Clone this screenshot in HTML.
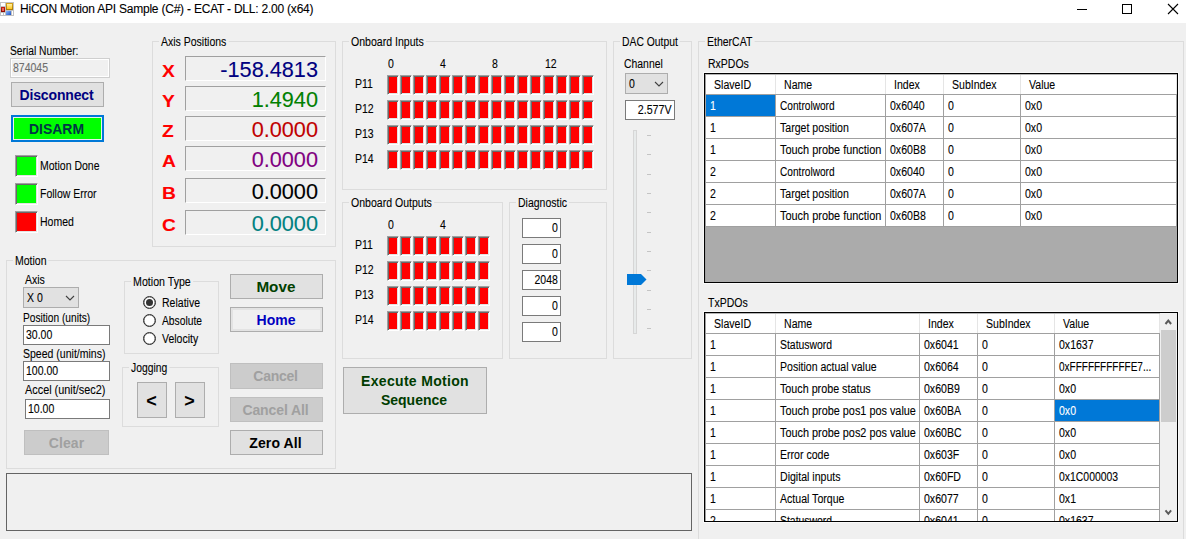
<!DOCTYPE html>
<html lang="en"><head><meta charset="utf-8"><title>HiCON Motion API Sample (C#)</title>
<style>
*{box-sizing:border-box;margin:0;padding:0}
html,body{width:1186px;height:539px;overflow:hidden;background:#f0f0f0}
body{position:relative;font-family:"Liberation Sans",sans-serif;font-size:12.5px;color:#000;line-height:13px;letter-spacing:0;-webkit-text-stroke:0.1px}
.t{display:inline-block;transform-origin:0 0;transform:scaleX(0.84);white-space:nowrap}
.tr{display:inline-block;transform-origin:100% 0;transform:scaleX(0.84);white-space:nowrap}
.a{position:absolute;white-space:nowrap}
.gb{position:absolute;border:1px solid #dcdcdc}
.lg{position:absolute;background:#f0f0f0;white-space:nowrap;padding:0 2.4px;transform-origin:0 0;transform:scaleX(0.84)}
.btn{position:absolute;border:1px solid #adadad;background:#e1e1e1;display:flex;align-items:center;justify-content:center;text-align:center;font-family:"Liberation Sans",sans-serif;font-weight:bold;font-size:14px;letter-spacing:0;line-height:19px;padding-top:2px;-webkit-text-stroke:0}
.btn.dis{background:#cccccc;border-color:#bfbfbf;color:#a0a0a0}
.tb{position:absolute;border:1px solid #7a7a7a;background:#fff}
.led{position:absolute;width:12px;height:20px;background:#ff0000;border-style:solid;border-width:1px;border-color:#a0a0a0 #fff #fff #a0a0a0;box-shadow:inset 1px 1px 0 #696969,inset -1px -1px 0 #e3e3e3}
.ind{position:absolute;width:23px;height:22px;border-style:solid;border-width:1px;border-color:#a0a0a0 #fff #fff #a0a0a0}
.pos{position:absolute;left:185px;width:141px;height:25px;border-style:solid;border-width:1px;border-color:#a0a0a0 #fff #fff #a0a0a0;font-size:21.7px;line-height:25px;text-align:right;padding-right:7px;letter-spacing:0}
.ax{position:absolute;left:162px;font-weight:bold;font-size:17px;color:#ff0000;line-height:19px;letter-spacing:0;transform:scaleX(1.13);transform-origin:0 0}
.combo{position:absolute;border:1px solid #adadad;background:#e1e1e1}
.radio{position:absolute;width:13px;height:13px;border:1px solid #2a2a2a;border-radius:50%;background:#fff;box-shadow:inset 0 0 0 0.35px #333}
.radio.on::after{content:"";position:absolute;left:2px;top:2px;width:7px;height:7px;border-radius:50%;background:#333}
.grid{position:absolute;left:704px;width:474px;height:210px;border:1px solid #000;background:#ababab;overflow:hidden;box-shadow:0 0 0 1px #fafafa}
.grid .c{position:absolute;height:22px;background:#fff;border-right:1px solid #a0a0a0;border-bottom:1px solid #a0a0a0;padding-left:4px;padding-top:1px;line-height:21px;overflow:hidden;white-space:nowrap}
.grid .h{position:absolute;height:19px;background:#fff;border-right:1px solid #e5e5e5;padding-left:8px;padding-top:1px;line-height:19px;white-space:nowrap}
.grid .sel{background:#0078d7;color:#fff}
</style></head><body>
<div class="a" style="left:0;top:0;width:1186px;height:23px;background:#fff"></div>
<svg class="a" style="left:0;top:2px" width="14" height="14" viewBox="0 0 14 14">
<defs>
<linearGradient id="gy" x1="0" y1="0" x2="0" y2="1"><stop offset="0" stop-color="#fff2a8"/><stop offset="1" stop-color="#ffc61a"/></linearGradient>
<linearGradient id="gyb" x1="0" y1="0" x2="0" y2="1"><stop offset="0" stop-color="#d8a418"/><stop offset="1" stop-color="#a87808"/></linearGradient>
<linearGradient id="gr" x1="0" y1="0" x2="0" y2="1"><stop offset="0" stop-color="#c82010"/><stop offset="1" stop-color="#8c0800"/></linearGradient>
<linearGradient id="gb" x1="0" y1="0" x2="1" y2="1"><stop offset="0" stop-color="#8ab8ff"/><stop offset="1" stop-color="#1c50c0"/></linearGradient>
</defs>
<rect x="0" y="0" width="14" height="14" fill="#c2c2c2"/>
<rect x="1" y="1" width="4" height="3" fill="#fff"/>
<rect x="1" y="11" width="2" height="2" fill="#fff"/><rect x="4" y="11" width="1" height="2" fill="#fff"/>
<rect x="12" y="9" width="1" height="4" fill="#fff"/>
<rect x="1" y="5" width="4" height="5" fill="url(#gr)"/><rect x="2" y="6" width="2" height="3" fill="#e86458"/>
<rect x="6" y="1" width="7" height="7" fill="url(#gyb)"/><rect x="7" y="2" width="5" height="5" fill="url(#gy)"/>
<rect x="6" y="9" width="5" height="4" fill="url(#gb)"/>
</svg>
<div class="a" style="left:20px;top:1px;font-size:12px;line-height:16px;letter-spacing:-0.22px">HiCON Motion API Sample (C#) - ECAT - DLL: 2.00 (x64)</div>
<svg class="a" style="left:1070px;top:0" width="116" height="23" viewBox="0 0 116 23" shape-rendering="crispEdges">
<rect x="7" y="9" width="10" height="1" fill="#000"/>
<rect x="52.5" y="4.5" width="9" height="9" fill="none" stroke="#000" stroke-width="1"/>
<g shape-rendering="auto"><path d="M98 4 L108 14 M108 4 L98 14" stroke="#000" stroke-width="1.1" fill="none"/></g>
</svg>
<div class="a t" style="left:10px;top:45px;transform:scaleX(0.821);">Serial Number:</div>
<div class="a" style="left:10px;top:58px;width:100px;height:20px;border:1px solid #cfcfcf;background:#f0f0f0;box-shadow:inset 0 0 0 1px #fff"></div>
<div class="a t" style="left:13px;top:62px;transform:scaleX(0.84);color:#6d6d6d">874045</div>
<div class="btn" style="left:11px;top:82px;width:93px;height:25px;color:#000080;padding-right:2px;letter-spacing:-0.15px">Disconnect</div>
<div class="btn" style="left:11px;top:115px;width:93px;height:27px;border:2px solid #0078d7;background:#00ff00;color:#003844;box-shadow:inset 0 0 0 1px #eaf2ea;padding-top:2px;padding-right:2px">DISARM</div>
<div class="ind" style="left:15px;top:155px;background:#00ff00;box-shadow:inset 1px 1px 0 #696969,inset -1px -1px 0 #e3e3e3"></div>
<div class="a t" style="left:40px;top:160px;transform:scaleX(0.84);">Motion Done</div>
<div class="ind" style="left:15px;top:183px;background:#00ff00;box-shadow:inset 1px 1px 0 #696969,inset -1px -1px 0 #e3e3e3"></div>
<div class="a t" style="left:40px;top:188px;transform:scaleX(0.84);">Follow Error</div>
<div class="ind" style="left:15px;top:211px;background:#ff0000;box-shadow:inset 1px 1px 0 #696969,inset -1px -1px 0 #e3e3e3"></div>
<div class="a t" style="left:40px;top:216px;transform:scaleX(0.84);">Homed</div>
<div class="gb" style="left:152px;top:41px;width:184px;height:206px"></div>
<div class="lg" style="left:159px;top:36px;transform:scaleX(0.84)">Axis Positions</div>
<div class="ax" style="top:62px">X</div>
<div class="pos" style="top:56px;color:#000080">-158.4813</div>
<div class="ax" style="top:92px">Y</div>
<div class="pos" style="top:86px;color:#008000">1.4940</div>
<div class="ax" style="top:122px">Z</div>
<div class="pos" style="top:116px;color:#c00000">0.0000</div>
<div class="ax" style="top:152px">A</div>
<div class="pos" style="top:146px;color:#800080">0.0000</div>
<div class="ax" style="top:184px">B</div>
<div class="pos" style="top:178px;color:#000000">0.0000</div>
<div class="ax" style="top:216px">C</div>
<div class="pos" style="top:210px;color:#008080">0.0000</div>
<div class="gb" style="left:6px;top:260px;width:330px;height:209px"></div>
<div class="lg" style="left:13px;top:255px;transform:scaleX(0.84)">Motion</div>
<div class="a t" style="left:25px;top:274px;transform:scaleX(0.84);">Axis</div>
<div class="combo" style="left:23px;top:287px;width:56px;height:21px"></div>
<div class="a t" style="left:27px;top:292px;transform:scaleX(0.84);">X 0</div>
<svg class="a" style="left:65px;top:294px" width="10" height="8" viewBox="0 0 10 8"><path d="M1 2 L5 6 L9 2" fill="none" stroke="#404040" stroke-width="1.1"/></svg>
<div class="a t" style="left:23px;top:312px;transform:scaleX(0.813);">Position (units)</div>
<div class="tb" style="left:23px;top:325px;width:87px;height:20px"></div>
<div class="a t" style="left:26px;top:329px;transform:scaleX(0.84);">30.00</div>
<div class="a t" style="left:23px;top:348px;transform:scaleX(0.842);">Speed (unit/mins)</div>
<div class="tb" style="left:23px;top:361px;width:87px;height:20px"></div>
<div class="a t" style="left:26px;top:365px;transform:scaleX(0.84);">100.00</div>
<div class="a t" style="left:25px;top:384px;transform:scaleX(0.87);">Accel (unit/sec2)</div>
<div class="tb" style="left:25px;top:399px;width:85px;height:20px"></div>
<div class="a t" style="left:28px;top:403px;transform:scaleX(0.84);">10.00</div>
<div class="btn dis" style="left:24px;top:430px;width:85px;height:25px;letter-spacing:0.05px">Clear</div>
<div class="gb" style="left:124px;top:281px;width:95px;height:73px"></div>
<div class="lg" style="left:131px;top:276px;transform:scaleX(0.851)">Motion Type</div>
<div class="radio on" style="left:143px;top:296px"></div>
<div class="a t" style="left:162px;top:297px;transform:scaleX(0.843);">Relative</div>
<div class="radio" style="left:143px;top:314px"></div>
<div class="a t" style="left:162px;top:315px;transform:scaleX(0.823);">Absolute</div>
<div class="radio" style="left:143px;top:332px"></div>
<div class="a t" style="left:162px;top:333px;transform:scaleX(0.84);">Velocity</div>
<div class="gb" style="left:122px;top:367px;width:97px;height:60px"></div>
<div class="lg" style="left:129px;top:362px;transform:scaleX(0.827)">Jogging</div>
<div class="btn" style="left:137px;top:382px;width:30px;height:36px;font-size:18px;padding-top:3px;padding-right:1px">&lt;</div>
<div class="btn" style="left:175px;top:382px;width:30px;height:36px;font-size:18px;padding-top:3px;padding-right:1px">&gt;</div>
<div class="btn" style="left:230px;top:274px;width:93px;height:25px;color:#004000;padding-right:2px"><span style="display:inline-block;transform:scaleX(1.09)">Move</span></div>
<div class="btn" style="left:230px;top:307px;width:93px;height:25px;color:#0000c0;background:#f0f0f0;box-shadow:inset 0 0 0 2px #e3e3e3;padding-right:1px">Home</div>
<div class="btn dis" style="left:230px;top:363px;width:93px;height:26px;padding-top:1px;padding-right:2px;letter-spacing:-0.25px">Cancel</div>
<div class="btn dis" style="left:230px;top:397px;width:93px;height:25px;padding-right:2px;letter-spacing:-0.1px">Cancel All</div>
<div class="btn" style="left:230px;top:430px;width:93px;height:25px;letter-spacing:0.1px;padding-right:2px">Zero All</div>
<div class="a" style="left:6px;top:473px;width:686px;height:58px;border:1px solid #646464;background:#f0f0f0"></div>
<div class="gb" style="left:342px;top:41px;width:265px;height:149px"></div>
<div class="lg" style="left:349px;top:36px;transform:scaleX(0.845)">Onboard Inputs</div>
<div class="a t" style="left:388px;top:58px;transform:scaleX(0.84);">0</div>
<div class="a t" style="left:440px;top:58px;transform:scaleX(0.84);">4</div>
<div class="a t" style="left:492px;top:58px;transform:scaleX(0.84);">8</div>
<div class="a t" style="left:545px;top:58px;transform:scaleX(0.84);">12</div>
<div class="a t" style="left:355px;top:78px;transform:scaleX(0.84);">P11</div>
<div class="led" style="left:387px;top:75px"></div>
<div class="led" style="left:400px;top:75px"></div>
<div class="led" style="left:413px;top:75px"></div>
<div class="led" style="left:426px;top:75px"></div>
<div class="led" style="left:439px;top:75px"></div>
<div class="led" style="left:452px;top:75px"></div>
<div class="led" style="left:465px;top:75px"></div>
<div class="led" style="left:478px;top:75px"></div>
<div class="led" style="left:491px;top:75px"></div>
<div class="led" style="left:504px;top:75px"></div>
<div class="led" style="left:517px;top:75px"></div>
<div class="led" style="left:530px;top:75px"></div>
<div class="led" style="left:543px;top:75px"></div>
<div class="led" style="left:556px;top:75px"></div>
<div class="led" style="left:569px;top:75px"></div>
<div class="led" style="left:582px;top:75px"></div>
<div class="a t" style="left:355px;top:103px;transform:scaleX(0.84);">P12</div>
<div class="led" style="left:387px;top:100px"></div>
<div class="led" style="left:400px;top:100px"></div>
<div class="led" style="left:413px;top:100px"></div>
<div class="led" style="left:426px;top:100px"></div>
<div class="led" style="left:439px;top:100px"></div>
<div class="led" style="left:452px;top:100px"></div>
<div class="led" style="left:465px;top:100px"></div>
<div class="led" style="left:478px;top:100px"></div>
<div class="led" style="left:491px;top:100px"></div>
<div class="led" style="left:504px;top:100px"></div>
<div class="led" style="left:517px;top:100px"></div>
<div class="led" style="left:530px;top:100px"></div>
<div class="led" style="left:543px;top:100px"></div>
<div class="led" style="left:556px;top:100px"></div>
<div class="led" style="left:569px;top:100px"></div>
<div class="led" style="left:582px;top:100px"></div>
<div class="a t" style="left:355px;top:128px;transform:scaleX(0.84);">P13</div>
<div class="led" style="left:387px;top:125px"></div>
<div class="led" style="left:400px;top:125px"></div>
<div class="led" style="left:413px;top:125px"></div>
<div class="led" style="left:426px;top:125px"></div>
<div class="led" style="left:439px;top:125px"></div>
<div class="led" style="left:452px;top:125px"></div>
<div class="led" style="left:465px;top:125px"></div>
<div class="led" style="left:478px;top:125px"></div>
<div class="led" style="left:491px;top:125px"></div>
<div class="led" style="left:504px;top:125px"></div>
<div class="led" style="left:517px;top:125px"></div>
<div class="led" style="left:530px;top:125px"></div>
<div class="led" style="left:543px;top:125px"></div>
<div class="led" style="left:556px;top:125px"></div>
<div class="led" style="left:569px;top:125px"></div>
<div class="led" style="left:582px;top:125px"></div>
<div class="a t" style="left:355px;top:153px;transform:scaleX(0.84);">P14</div>
<div class="led" style="left:387px;top:150px"></div>
<div class="led" style="left:400px;top:150px"></div>
<div class="led" style="left:413px;top:150px"></div>
<div class="led" style="left:426px;top:150px"></div>
<div class="led" style="left:439px;top:150px"></div>
<div class="led" style="left:452px;top:150px"></div>
<div class="led" style="left:465px;top:150px"></div>
<div class="led" style="left:478px;top:150px"></div>
<div class="led" style="left:491px;top:150px"></div>
<div class="led" style="left:504px;top:150px"></div>
<div class="led" style="left:517px;top:150px"></div>
<div class="led" style="left:530px;top:150px"></div>
<div class="led" style="left:543px;top:150px"></div>
<div class="led" style="left:556px;top:150px"></div>
<div class="led" style="left:569px;top:150px"></div>
<div class="led" style="left:582px;top:150px"></div>
<div class="gb" style="left:342px;top:202px;width:161px;height:157px"></div>
<div class="lg" style="left:349px;top:197px;transform:scaleX(0.843)">Onboard Outputs</div>
<div class="a t" style="left:388px;top:219px;transform:scaleX(0.84);">0</div>
<div class="a t" style="left:440px;top:219px;transform:scaleX(0.84);">4</div>
<div class="a t" style="left:355px;top:239px;transform:scaleX(0.84);">P11</div>
<div class="led" style="left:387px;top:236px"></div>
<div class="led" style="left:400px;top:236px"></div>
<div class="led" style="left:413px;top:236px"></div>
<div class="led" style="left:426px;top:236px"></div>
<div class="led" style="left:439px;top:236px"></div>
<div class="led" style="left:452px;top:236px"></div>
<div class="led" style="left:465px;top:236px"></div>
<div class="led" style="left:478px;top:236px"></div>
<div class="a t" style="left:355px;top:264px;transform:scaleX(0.84);">P12</div>
<div class="led" style="left:387px;top:261px"></div>
<div class="led" style="left:400px;top:261px"></div>
<div class="led" style="left:413px;top:261px"></div>
<div class="led" style="left:426px;top:261px"></div>
<div class="led" style="left:439px;top:261px"></div>
<div class="led" style="left:452px;top:261px"></div>
<div class="led" style="left:465px;top:261px"></div>
<div class="led" style="left:478px;top:261px"></div>
<div class="a t" style="left:355px;top:289px;transform:scaleX(0.84);">P13</div>
<div class="led" style="left:387px;top:286px"></div>
<div class="led" style="left:400px;top:286px"></div>
<div class="led" style="left:413px;top:286px"></div>
<div class="led" style="left:426px;top:286px"></div>
<div class="led" style="left:439px;top:286px"></div>
<div class="led" style="left:452px;top:286px"></div>
<div class="led" style="left:465px;top:286px"></div>
<div class="led" style="left:478px;top:286px"></div>
<div class="a t" style="left:355px;top:314px;transform:scaleX(0.84);">P14</div>
<div class="led" style="left:387px;top:311px"></div>
<div class="led" style="left:400px;top:311px"></div>
<div class="led" style="left:413px;top:311px"></div>
<div class="led" style="left:426px;top:311px"></div>
<div class="led" style="left:439px;top:311px"></div>
<div class="led" style="left:452px;top:311px"></div>
<div class="led" style="left:465px;top:311px"></div>
<div class="led" style="left:478px;top:311px"></div>
<div class="gb" style="left:509px;top:202px;width:98px;height:157px"></div>
<div class="lg" style="left:516px;top:197px;transform:scaleX(0.839)">Diagnostic</div>
<div class="tb" style="left:522px;top:218px;width:39px;height:20px"></div>
<div class="a tr" style="right:628px;top:222px">0</div>
<div class="tb" style="left:522px;top:244px;width:39px;height:20px"></div>
<div class="a tr" style="right:628px;top:248px">0</div>
<div class="tb" style="left:522px;top:270px;width:39px;height:20px"></div>
<div class="a tr" style="right:628px;top:274px">2048</div>
<div class="tb" style="left:522px;top:296px;width:39px;height:20px"></div>
<div class="a tr" style="right:628px;top:300px">0</div>
<div class="tb" style="left:522px;top:322px;width:39px;height:20px"></div>
<div class="a tr" style="right:628px;top:326px">0</div>
<div class="btn" style="left:343px;top:367px;width:144px;height:47px;color:#003c00;padding-top:1px"><span><span style="letter-spacing:0.32px">Execute Motion</span><br><span style="position:relative;left:-1px">Sequence</span></span></div>
<div class="gb" style="left:613px;top:41px;width:79px;height:318px"></div>
<div class="lg" style="left:620px;top:36px;transform:scaleX(0.829)">DAC Output</div>
<div class="a t" style="left:624px;top:58px;transform:scaleX(0.833);">Channel</div>
<div class="combo" style="left:625px;top:73px;width:43px;height:21px"></div>
<div class="a t" style="left:629px;top:78px;transform:scaleX(0.84);">0</div>
<svg class="a" style="left:654px;top:80px" width="10" height="8" viewBox="0 0 10 8"><path d="M1 2 L5 6 L9 2" fill="none" stroke="#404040" stroke-width="1.1"/></svg>
<div class="tb" style="left:625px;top:100px;width:50px;height:20px;overflow:hidden"></div>
<div class="a tr" style="right:514px;top:104px;transform:scaleX(0.855)">2.577V</div>
<div class="a" style="left:633px;top:130px;width:4px;height:204px;background:#e7eaea;border:1px solid #d6d6d6"></div>
<div class="a" style="left:647px;top:135px;width:4px;height:1px;background:#c4c4c4"></div>
<div class="a" style="left:647px;top:154px;width:4px;height:1px;background:#c4c4c4"></div>
<div class="a" style="left:647px;top:174px;width:4px;height:1px;background:#c4c4c4"></div>
<div class="a" style="left:647px;top:193px;width:4px;height:1px;background:#c4c4c4"></div>
<div class="a" style="left:647px;top:212px;width:4px;height:1px;background:#c4c4c4"></div>
<div class="a" style="left:647px;top:232px;width:4px;height:1px;background:#c4c4c4"></div>
<div class="a" style="left:647px;top:251px;width:4px;height:1px;background:#c4c4c4"></div>
<div class="a" style="left:647px;top:270px;width:4px;height:1px;background:#c4c4c4"></div>
<div class="a" style="left:647px;top:290px;width:4px;height:1px;background:#c4c4c4"></div>
<div class="a" style="left:647px;top:309px;width:4px;height:1px;background:#c4c4c4"></div>
<div class="a" style="left:647px;top:328px;width:4px;height:1px;background:#c4c4c4"></div>
<svg class="a" style="left:627px;top:274px" width="20" height="11" viewBox="0 0 20 11"><path d="M0 0 H14 L19.5 5.5 L14 11 H0 Z" fill="#0078d7"/></svg>
<div class="gb" style="left:698px;top:41px;width:486px;height:520px"></div>
<div class="lg" style="left:705px;top:36px;transform:scaleX(0.84)">EtherCAT</div>
<div class="a t" style="left:708px;top:58px;transform:scaleX(0.84);">RxPDOs</div>
<div class="a t" style="left:708px;top:297px;transform:scaleX(0.84);">TxPDOs</div>
<div class="grid" style="top:73px">
<div class="a" style="left:0;top:0;width:472px;height:1px;background:#b4b4b4"></div>
<div class="a" style="left:0;top:0;width:1px;height:208px;background:#a0a0a0"></div>
<div class="h" style="left:1px;top:1px;width:70px"><span class="t" style="transform:scaleX(0.846)">SlaveID</span></div>
<div class="h" style="left:71px;top:1px;width:110px"><span class="t" style="transform:scaleX(0.845)">Name</span></div>
<div class="h" style="left:181px;top:1px;width:58px"><span class="t" style="transform:scaleX(0.845)">Index</span></div>
<div class="h" style="left:239px;top:1px;width:77px"><span class="t" style="transform:scaleX(0.845)">SubIndex</span></div>
<div class="h" style="left:316px;top:1px;width:156px"><span class="t" style="transform:scaleX(0.845)">Value</span></div>
<div class="a" style="left:1px;top:20px;width:471px;height:1px;background:#a0a0a0"></div>
<div class="c sel" style="left:1px;top:21px;width:70px"><span class="t" style="transform:scaleX(0.845)">1</span></div>
<div class="c" style="left:71px;top:21px;width:110px"><span class="t" style="transform:scaleX(0.81)">Controlword</span></div>
<div class="c" style="left:181px;top:21px;width:58px"><span class="t" style="transform:scaleX(0.845)">0x6040</span></div>
<div class="c" style="left:239px;top:21px;width:77px"><span class="t" style="transform:scaleX(0.845)">0</span></div>
<div class="c" style="left:316px;top:21px;width:156px"><span class="t" style="transform:scaleX(0.845)">0x0</span></div>
<div class="c" style="left:1px;top:43px;width:70px"><span class="t" style="transform:scaleX(0.845)">1</span></div>
<div class="c" style="left:71px;top:43px;width:110px"><span class="t" style="transform:scaleX(0.847)">Target position</span></div>
<div class="c" style="left:181px;top:43px;width:58px"><span class="t" style="transform:scaleX(0.845)">0x607A</span></div>
<div class="c" style="left:239px;top:43px;width:77px"><span class="t" style="transform:scaleX(0.845)">0</span></div>
<div class="c" style="left:316px;top:43px;width:156px"><span class="t" style="transform:scaleX(0.845)">0x0</span></div>
<div class="c" style="left:1px;top:65px;width:70px"><span class="t" style="transform:scaleX(0.845)">1</span></div>
<div class="c" style="left:71px;top:65px;width:110px"><span class="t" style="transform:scaleX(0.874)">Touch probe function</span></div>
<div class="c" style="left:181px;top:65px;width:58px"><span class="t" style="transform:scaleX(0.845)">0x60B8</span></div>
<div class="c" style="left:239px;top:65px;width:77px"><span class="t" style="transform:scaleX(0.845)">0</span></div>
<div class="c" style="left:316px;top:65px;width:156px"><span class="t" style="transform:scaleX(0.845)">0x0</span></div>
<div class="c" style="left:1px;top:87px;width:70px"><span class="t" style="transform:scaleX(0.845)">2</span></div>
<div class="c" style="left:71px;top:87px;width:110px"><span class="t" style="transform:scaleX(0.81)">Controlword</span></div>
<div class="c" style="left:181px;top:87px;width:58px"><span class="t" style="transform:scaleX(0.845)">0x6040</span></div>
<div class="c" style="left:239px;top:87px;width:77px"><span class="t" style="transform:scaleX(0.845)">0</span></div>
<div class="c" style="left:316px;top:87px;width:156px"><span class="t" style="transform:scaleX(0.845)">0x0</span></div>
<div class="c" style="left:1px;top:109px;width:70px"><span class="t" style="transform:scaleX(0.845)">2</span></div>
<div class="c" style="left:71px;top:109px;width:110px"><span class="t" style="transform:scaleX(0.847)">Target position</span></div>
<div class="c" style="left:181px;top:109px;width:58px"><span class="t" style="transform:scaleX(0.845)">0x607A</span></div>
<div class="c" style="left:239px;top:109px;width:77px"><span class="t" style="transform:scaleX(0.845)">0</span></div>
<div class="c" style="left:316px;top:109px;width:156px"><span class="t" style="transform:scaleX(0.845)">0x0</span></div>
<div class="c" style="left:1px;top:131px;width:70px"><span class="t" style="transform:scaleX(0.845)">2</span></div>
<div class="c" style="left:71px;top:131px;width:110px"><span class="t" style="transform:scaleX(0.874)">Touch probe function</span></div>
<div class="c" style="left:181px;top:131px;width:58px"><span class="t" style="transform:scaleX(0.845)">0x60B8</span></div>
<div class="c" style="left:239px;top:131px;width:77px"><span class="t" style="transform:scaleX(0.845)">0</span></div>
<div class="c" style="left:316px;top:131px;width:156px"><span class="t" style="transform:scaleX(0.845)">0x0</span></div>
</div>
<div class="grid" style="top:312px">
<div class="a" style="left:0;top:0;width:455px;height:1px;background:#b4b4b4"></div>
<div class="a" style="left:0;top:0;width:1px;height:208px;background:#a0a0a0"></div>
<div class="h" style="left:1px;top:1px;width:70px"><span class="t" style="transform:scaleX(0.846)">SlaveID</span></div>
<div class="h" style="left:71px;top:1px;width:144px"><span class="t" style="transform:scaleX(0.845)">Name</span></div>
<div class="h" style="left:215px;top:1px;width:58px"><span class="t" style="transform:scaleX(0.845)">Index</span></div>
<div class="h" style="left:273px;top:1px;width:77px"><span class="t" style="transform:scaleX(0.845)">SubIndex</span></div>
<div class="h" style="left:350px;top:1px;width:105px"><span class="t" style="transform:scaleX(0.845)">Value</span></div>
<div class="a" style="left:1px;top:20px;width:454px;height:1px;background:#a0a0a0"></div>
<div class="c" style="left:1px;top:21px;width:70px"><span class="t" style="transform:scaleX(0.845)">1</span></div>
<div class="c" style="left:71px;top:21px;width:144px"><span class="t" style="transform:scaleX(0.833)">Statusword</span></div>
<div class="c" style="left:215px;top:21px;width:58px"><span class="t" style="transform:scaleX(0.845)">0x6041</span></div>
<div class="c" style="left:273px;top:21px;width:77px"><span class="t" style="transform:scaleX(0.845)">0</span></div>
<div class="c" style="left:350px;top:21px;width:105px"><span class="t" style="transform:scaleX(0.843)">0x1637</span></div>
<div class="c" style="left:1px;top:43px;width:70px"><span class="t" style="transform:scaleX(0.845)">1</span></div>
<div class="c" style="left:71px;top:43px;width:144px"><span class="t" style="transform:scaleX(0.843)">Position actual value</span></div>
<div class="c" style="left:215px;top:43px;width:58px"><span class="t" style="transform:scaleX(0.845)">0x6064</span></div>
<div class="c" style="left:273px;top:43px;width:77px"><span class="t" style="transform:scaleX(0.845)">0</span></div>
<div class="c" style="left:350px;top:43px;width:105px"><span class="t" style="transform:scaleX(0.8)">0xFFFFFFFFFFE7...</span></div>
<div class="c" style="left:1px;top:65px;width:70px"><span class="t" style="transform:scaleX(0.845)">1</span></div>
<div class="c" style="left:71px;top:65px;width:144px"><span class="t" style="transform:scaleX(0.859)">Touch probe status</span></div>
<div class="c" style="left:215px;top:65px;width:58px"><span class="t" style="transform:scaleX(0.845)">0x60B9</span></div>
<div class="c" style="left:273px;top:65px;width:77px"><span class="t" style="transform:scaleX(0.845)">0</span></div>
<div class="c" style="left:350px;top:65px;width:105px"><span class="t" style="transform:scaleX(0.845)">0x0</span></div>
<div class="c" style="left:1px;top:87px;width:70px"><span class="t" style="transform:scaleX(0.845)">1</span></div>
<div class="c" style="left:71px;top:87px;width:144px"><span class="t" style="transform:scaleX(0.869)">Touch probe pos1 pos value</span></div>
<div class="c" style="left:215px;top:87px;width:58px"><span class="t" style="transform:scaleX(0.845)">0x60BA</span></div>
<div class="c" style="left:273px;top:87px;width:77px"><span class="t" style="transform:scaleX(0.845)">0</span></div>
<div class="c sel" style="left:350px;top:87px;width:105px"><span class="t" style="transform:scaleX(0.845)">0x0</span></div>
<div class="c" style="left:1px;top:109px;width:70px"><span class="t" style="transform:scaleX(0.845)">1</span></div>
<div class="c" style="left:71px;top:109px;width:144px"><span class="t" style="transform:scaleX(0.869)">Touch probe pos2 pos value</span></div>
<div class="c" style="left:215px;top:109px;width:58px"><span class="t" style="transform:scaleX(0.845)">0x60BC</span></div>
<div class="c" style="left:273px;top:109px;width:77px"><span class="t" style="transform:scaleX(0.845)">0</span></div>
<div class="c" style="left:350px;top:109px;width:105px"><span class="t" style="transform:scaleX(0.845)">0x0</span></div>
<div class="c" style="left:1px;top:131px;width:70px"><span class="t" style="transform:scaleX(0.845)">1</span></div>
<div class="c" style="left:71px;top:131px;width:144px"><span class="t" style="transform:scaleX(0.845)">Error code</span></div>
<div class="c" style="left:215px;top:131px;width:58px"><span class="t" style="transform:scaleX(0.845)">0x603F</span></div>
<div class="c" style="left:273px;top:131px;width:77px"><span class="t" style="transform:scaleX(0.845)">0</span></div>
<div class="c" style="left:350px;top:131px;width:105px"><span class="t" style="transform:scaleX(0.845)">0x0</span></div>
<div class="c" style="left:1px;top:153px;width:70px"><span class="t" style="transform:scaleX(0.845)">1</span></div>
<div class="c" style="left:71px;top:153px;width:144px"><span class="t" style="transform:scaleX(0.845)">Digital inputs</span></div>
<div class="c" style="left:215px;top:153px;width:58px"><span class="t" style="transform:scaleX(0.845)">0x60FD</span></div>
<div class="c" style="left:273px;top:153px;width:77px"><span class="t" style="transform:scaleX(0.845)">0</span></div>
<div class="c" style="left:350px;top:153px;width:105px"><span class="t" style="transform:scaleX(0.834)">0x1C000003</span></div>
<div class="c" style="left:1px;top:175px;width:70px"><span class="t" style="transform:scaleX(0.845)">1</span></div>
<div class="c" style="left:71px;top:175px;width:144px"><span class="t" style="transform:scaleX(0.845)">Actual Torque</span></div>
<div class="c" style="left:215px;top:175px;width:58px"><span class="t" style="transform:scaleX(0.845)">0x6077</span></div>
<div class="c" style="left:273px;top:175px;width:77px"><span class="t" style="transform:scaleX(0.845)">0</span></div>
<div class="c" style="left:350px;top:175px;width:105px"><span class="t" style="transform:scaleX(0.845)">0x1</span></div>
<div class="c" style="left:1px;top:197px;width:70px"><span class="t" style="transform:scaleX(0.845)">2</span></div>
<div class="c" style="left:71px;top:197px;width:144px"><span class="t" style="transform:scaleX(0.833)">Statusword</span></div>
<div class="c" style="left:215px;top:197px;width:58px"><span class="t" style="transform:scaleX(0.845)">0x6041</span></div>
<div class="c" style="left:273px;top:197px;width:77px"><span class="t" style="transform:scaleX(0.845)">0</span></div>
<div class="c" style="left:350px;top:197px;width:105px"><span class="t" style="transform:scaleX(0.843)">0x1637</span></div>
<div class="a" style="left:455px;top:0;width:17px;height:208px;background:#f0f0f0"></div>
<div class="a" style="left:456px;top:17px;width:15px;height:92px;background:#cdcdcd"></div>
<svg class="a" style="left:459px;top:5px" width="9" height="8" viewBox="0 0 9 8"><path d="M1.5 6 L4.3 2.6 L7.1 6" fill="none" stroke="#5a5a5a" stroke-width="2"/></svg>
<svg class="a" style="left:459px;top:195px" width="9" height="9" viewBox="0 0 9 9"><path d="M1.5 2.4 L4.3 5.8 L7.1 2.4" fill="none" stroke="#5a5a5a" stroke-width="2"/></svg>
</div>
</body></html>
